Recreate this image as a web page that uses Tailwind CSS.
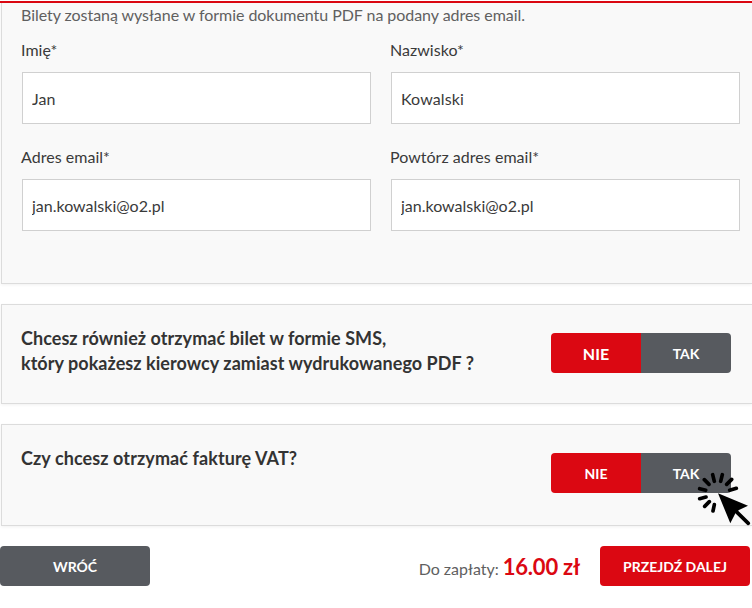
<!DOCTYPE html>
<html lang="pl">
<head>
    <meta charset="UTF-8">
    <meta name="viewport" content="width=device-width, initial-scale=1.0">
    <title>Dane do zamówienia</title>
    <script src="https://cdn.jsdelivr.net/npm/@tailwindcss/browser@4"></script>
</head>
<body class="bg-white font-['Lato',sans-serif] text-base text-[#3a3a3a] overflow-hidden">
    <div class="relative w-[752px] h-[608px] pt-px overflow-hidden">
        <div class="h-0.5 bg-[#db0812]"></div>

        <form id="orderForm">
            <!-- Passenger data -->
            <section class="ml-px h-[281px] bg-[#f9f9f9] border-l border-b border-[#dcdcdc] shadow-[0_1px_3px_rgba(0,0,0,0.06)] pl-[19px] pr-3">
                <p class="text-[#606060] leading-6 tracking-[-0.05px]">Bilety zostaną wysłane w formie dokumentu PDF na podany adres email.</p>
                <div class="grid grid-cols-[349px_349px] gap-x-5 gap-y-[21px] mt-[11px] ml-px">
                    <div>
                        <label for="firstName" class="block leading-6 mb-[10px] -ml-px tracking-[0.03px]">Imię*</label>
                        <input type="text" id="firstName" value="Jan" class="block w-full h-[52px] px-[9px] bg-white border border-[#d0d0d0]">
                    </div>
                    <div>
                        <label for="lastName" class="block leading-6 mb-[10px] -ml-px tracking-[0.03px]">Nazwisko*</label>
                        <input type="text" id="lastName" value="Kowalski" class="block w-full h-[52px] px-[9px] bg-white border border-[#d0d0d0] tracking-[0.1px]">
                    </div>
                    <div>
                        <label for="email" class="block leading-6 mb-[10px] -ml-px tracking-[0.03px]">Adres email*</label>
                        <input type="text" id="email" value="jan.kowalski@o2.pl" class="block w-full h-[52px] px-[9px] bg-white border border-[#d0d0d0]">
                    </div>
                    <div>
                        <label for="emailRepeat" class="block leading-6 mb-[10px] -ml-px tracking-[0.03px]">Powtórz adres email*</label>
                        <input type="text" id="emailRepeat" value="jan.kowalski@o2.pl" class="block w-full h-[52px] px-[9px] bg-white border border-[#d0d0d0]">
                    </div>
                </div>
            </section>

            <!-- SMS ticket -->
            <section class="ml-px mt-5 h-[100px] flex items-start justify-between bg-[#f9f9f9] border border-r-0 border-[#dcdcdc] shadow-[0_1px_3px_rgba(0,0,0,0.06)] pl-[19px] pr-[21px]">
                <h3 class="mt-[21px] text-lg font-bold leading-[25px] tracking-[0.05px] whitespace-nowrap text-[#333]">Chcesz również otrzymać bilet w formie SMS,<br>który pokażesz kierowcy zamiast wydrukowanego PDF ?</h3>
                <div class="flex mt-7 w-[180px] h-10 rounded overflow-hidden text-white font-bold">
                    <button type="button" class="w-[90px] pt-0.5 bg-[#db0812] text-base">NIE</button>
                    <button type="button" class="w-[90px] pt-0.5 bg-[#575a5f] text-sm">TAK</button>
                </div>
            </section>

            <!-- Invoice -->
            <section class="ml-px mt-5 h-[102px] flex items-start justify-between bg-[#f9f9f9] border border-r-0 border-[#dcdcdc] shadow-[0_1px_3px_rgba(0,0,0,0.06)] pl-[19px] pr-[21px]">
                <h3 class="mt-[21px] text-lg font-bold leading-[25px] tracking-[0.09px] whitespace-nowrap text-[#333]">Czy chcesz otrzymać fakturę VAT?</h3>
                <div class="flex mt-7 w-[180px] h-10 rounded overflow-hidden text-white font-bold text-sm">
                    <button type="button" class="w-[90px] pt-0.5 bg-[#db0812]">NIE</button>
                    <button type="button" class="w-[90px] pt-0.5 bg-[#575a5f]">TAK</button>
                </div>
            </section>

            <!-- Summary -->
            <div class="mt-5 w-[750px] h-10 flex items-center">
                <button type="button" class="w-[150px] h-10 pt-0.5 rounded bg-[#575a5f] text-white text-sm font-bold">WRÓĆ</button>
                <p class="ml-auto mr-5 flex items-baseline gap-1 text-[#606060]">Do zapłaty: <span class="text-[22px] font-bold tracking-[-0.22px] text-[#db0812]">16.00 zł</span></p>
                <button type="submit" class="w-[150px] h-10 pt-0.5 rounded bg-[#db0812] text-white text-sm font-bold">PRZEJDŹ DALEJ</button>
            </div>
        </form>

        <!-- Click pointer -->
        <svg class="absolute left-[696px] top-[470px] w-14 h-14 pointer-events-none" viewBox="48 30 168 168" fill="none" stroke="#000" stroke-width="11" stroke-linecap="round">
            <path d="M59 86L77 91M73 59L87 73M98 44L103 64M127 44L122 64M155 58L140 73M149 91L169 85M78 111L59 116M88 125L74 139M103 134L99 153"/>
            <path d="M114 100L204 137L177 150L167 158L151 190Z" fill="#000" stroke="none"/>
            <path d="M166 152L205 190" stroke-width="11"/>
        </svg>
    </div>
</body>
</html>
